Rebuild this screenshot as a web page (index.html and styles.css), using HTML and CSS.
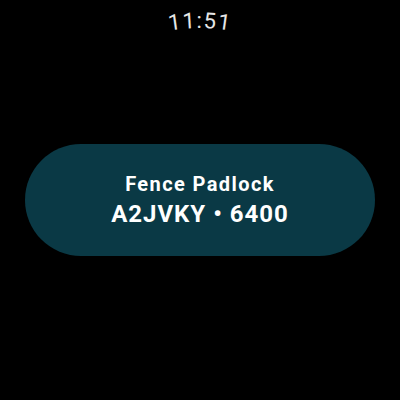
FILE: index.html
```html
<!DOCTYPE html>
<html>
<head>
<meta charset="utf-8">
<link rel="stylesheet" href="styles.css">
</head>
<body>
<div class="screen">
  <svg class="time" width="400" height="40" viewBox="0 0 400 40">
    <path id="arc" d="M 28 200 A 172 172 0 0 1 372 200" fill="none"/>
    <text class="time-text"><textPath href="#arc" startOffset="50%" text-anchor="middle">11:51</textPath></text>
  </svg>
  <div class="chip">
    <div class="chip-title">Fence Padlock</div>
    <div class="chip-code">A2JVKY • 6400</div>
  </div>
</div>
</body>
</html>
```

FILE: styles.css
```css
html, body {
  margin: 0;
  padding: 0;
  background: #000;
}
.screen {
  width: 400px;
  height: 400px;
  display: flex;
  flex-direction: column;
  align-items: center;
  font-family: Roboto, "Noto Sans", sans-serif;
}
.time {
  display: block;
}
.time-text {
  font-family: Roboto, sans-serif;
  font-size: 22px;
  letter-spacing: 1.4px;
  fill: #e6e6e6;
}
.chip {
  margin-top: 104px;
  width: 350px;
  height: 112px;
  border-radius: 56px;
  background: #0a3945;
  display: flex;
  flex-direction: column;
  align-items: center;
  justify-content: center;
  color: #fff;
}
.chip-title {
  font-size: 20px;
  font-weight: 700;
  letter-spacing: 1.4px;
  line-height: 24px;
}
.chip-code {
  font-size: 24px;
  font-weight: 700;
  letter-spacing: 1px;
  line-height: 28px;
  margin-top: 4px;
}
```
